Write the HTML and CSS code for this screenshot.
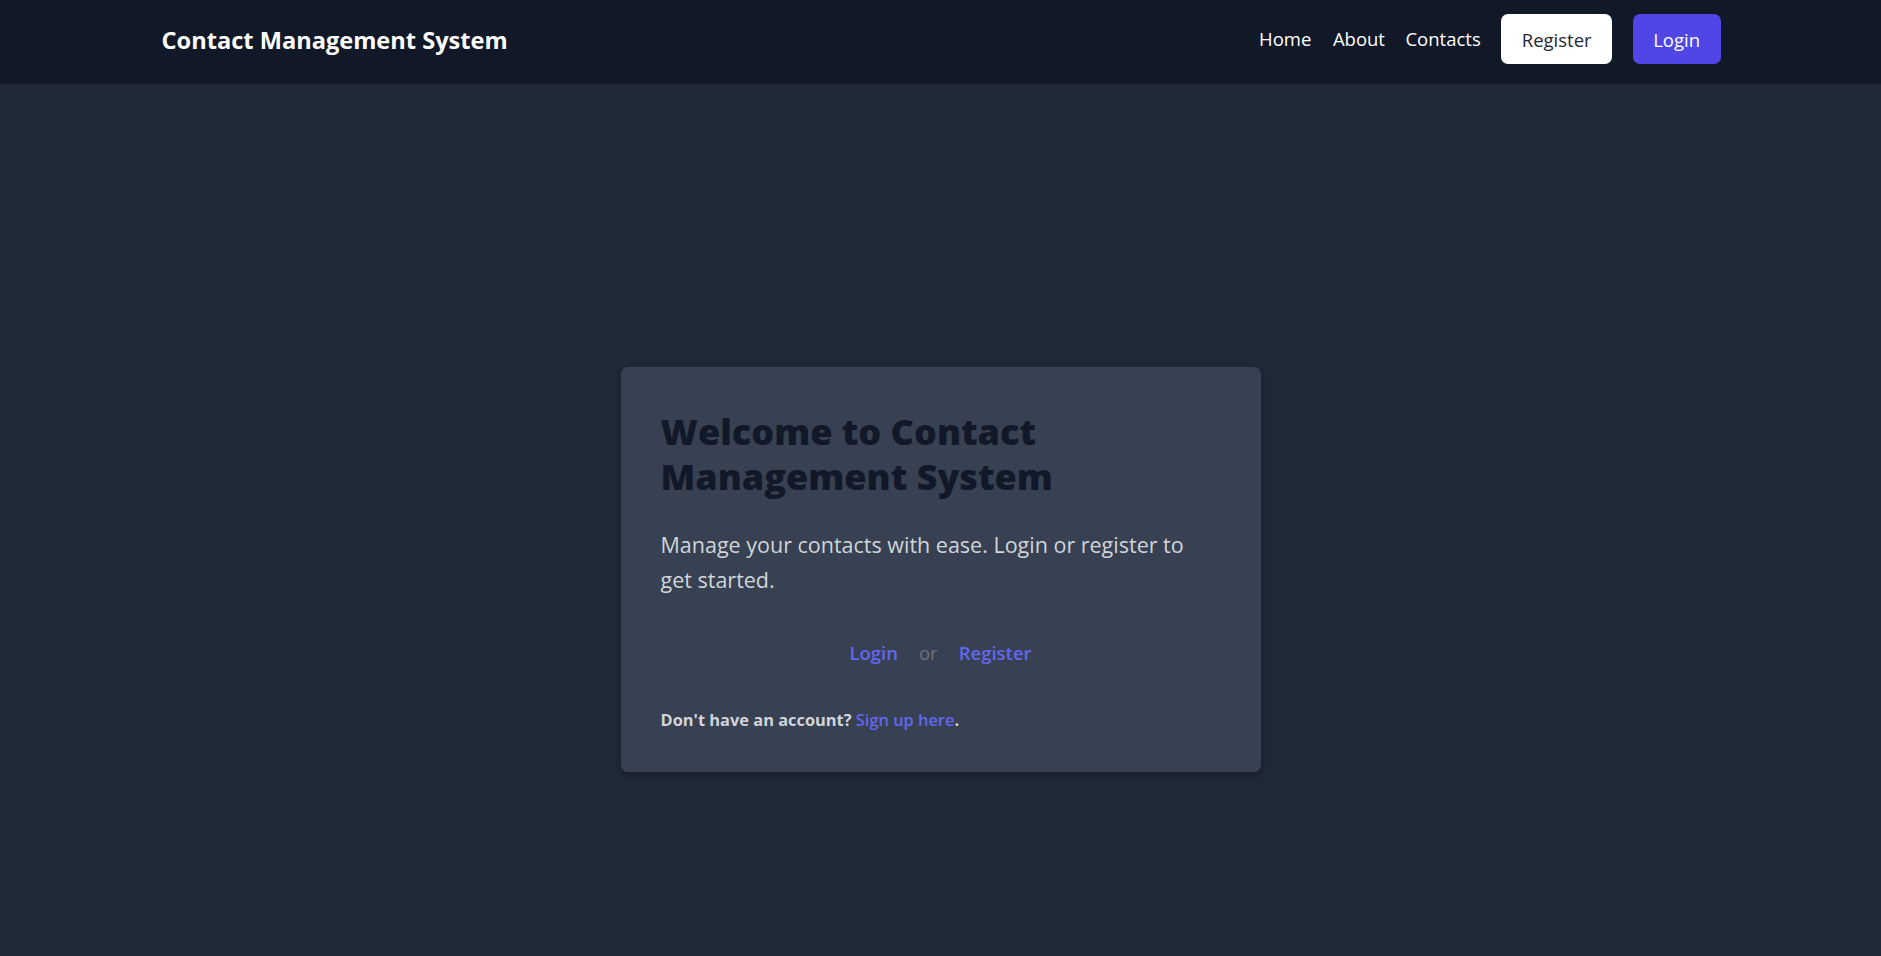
FILE: index.html
```html
<!DOCTYPE html>
<html lang="en">
<head>
<meta charset="utf-8">
<title>Contact Management System</title>
<link rel="stylesheet" href="styles.css">
</head>
<body>
<header class="topbar">
  <div class="topbar-inner">
    <a class="brand" href="#">Contact Management System</a>
    <nav class="nav">
      <a class="nav-link" href="#">Home</a>
      <a class="nav-link" href="#">About</a>
      <a class="nav-link" href="#">Contacts</a>
      <a class="btn btn-light" href="#">Register</a>
      <a class="btn btn-primary" href="#">Login</a>
    </nav>
  </div>
</header>
<main class="main">
  <section class="card">
    <h1 class="card-title">Welcome to Contact Management System</h1>
    <p class="card-text">Manage your contacts with ease. Login or register to get started.</p>
    <div class="card-actions">
      <a class="action-link" href="#">Login</a>
      <span class="action-sep">or</span>
      <a class="action-link" href="#">Register</a>
    </div>
    <p class="card-note">Don't have an account? <a class="note-link" href="#">Sign up here</a>.</p>
  </section>
</main>
</body>
</html>
```

FILE: styles.css
```css
* { box-sizing: border-box; }
html, body { margin: 0; padding: 0; }
body {
  background: #1f2937;
  font-family: "Open Sans", "Noto Sans", "Liberation Sans", sans-serif;
  min-height: 956px;
  color: #ffffff;
}
a { text-decoration: none; }

.topbar {
  background: #111827;
  height: 84px;
}
.topbar-inner {
  width: 1560px;
  margin: 0 auto;
  height: 100%;
  display: flex;
  align-items: flex-start;
  justify-content: space-between;
  padding: 14px 0 0 1px;
}
.brand {
  color: #ffffff;
  font-weight: 700;
  font-size: 23.6px;
  line-height: 32px;
  margin-top: 10px;
}
.nav {
  display: flex;
  align-items: center;
  gap: 20.5px;
}
.nav-link {
  color: #ffffff;
  font-size: 18.5px;
  line-height: 28.8px;
  padding-top: 2px;
}
.nav-link:first-child { margin-right: 1px; }
.btn {
  display: block;
  font-size: 18.5px;
  line-height: 29px;
  padding: 11px 20.5px 9.5px;
  border-radius: 7px;
}
.btn-light { background: #ffffff; color: #1f2937; }
.btn-primary { background: #4f46e5; color: #ffffff; }

.main {
  display: flex;
  justify-content: center;
  padding-top: 283px;
}
.card {
  width: 640px;
  background: #374151;
  border-radius: 7px;
  padding: 42px 40px 40px;
  box-shadow: 0 4px 8px rgba(0,0,0,0.15), 0 2px 4px rgba(0,0,0,0.1);
}
.card-title {
  margin: 0 0 28px;
  color: #111827;
  font-weight: 800;
  font-size: 36px;
  line-height: 45px;
}
.card-text {
  margin: 0 0 42px;
  color: #d1d5db;
  font-size: 21.5px;
  line-height: 35px;
}
.card-actions {
  display: flex;
  justify-content: center;
  align-items: center;
  gap: 21px;
  margin-bottom: 40px;
}
.action-link {
  color: #6366f1;
  font-weight: 600;
  font-size: 18.5px;
  line-height: 28.8px;
}
.action-sep {
  color: #6b7280;
  font-size: 18.5px;
  line-height: 28.8px;
}
.card-note {
  margin: 0;
  color: #d1d5db;
  font-weight: 700;
  font-size: 16.4px;
  line-height: 24px;
}
.note-link {
  color: #6366f1;
  font-weight: 600;
}
```
